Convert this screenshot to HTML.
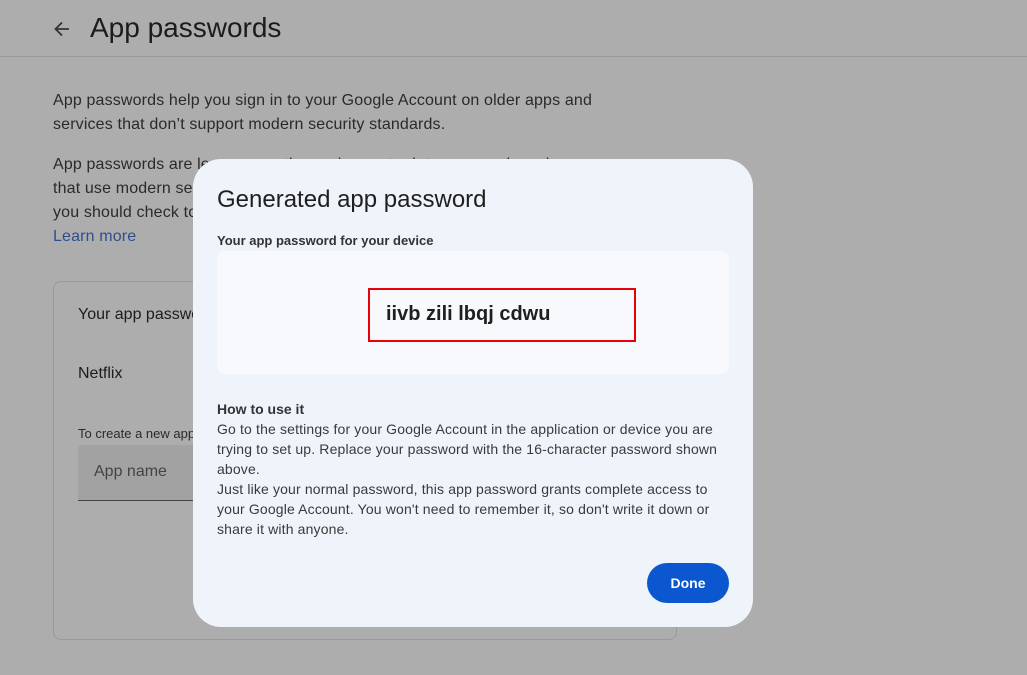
<!DOCTYPE html>
<html><head><meta charset="utf-8"><style>
*{margin:0;padding:0;box-sizing:border-box}
body{width:1027px;height:675px;overflow:hidden;background:#adadad;font-family:"Liberation Sans",Arial,sans-serif;color:#1a1a1a;position:relative}
.a{position:absolute;white-space:nowrap}
</style></head><body>
<svg class="a" style="left:52px;top:19px" width="20" height="20" viewBox="0 0 20 20"><path d="M17 10H4M10 3.5L3.5 10 10 16.5" stroke="#333" stroke-width="1.8" fill="none"/></svg>
<div class="a" style="left:90px;top:12px;font-size:28px;color:#1c1c1c">App passwords</div>
<div class="a" style="left:0;top:56px;width:1027px;height:1px;background:#999"></div>
<div class="a" style="left:53px;top:89px;font-size:16px;line-height:24px;color:#2a2a2a;letter-spacing:0.15px">App passwords help you sign in to your Google Account on older apps and<br>services that don’t support modern security standards.</div>
<div class="a" style="left:53px;top:153px;font-size:16px;line-height:24px;color:#2a2a2a;letter-spacing:0.15px">App passwords are less secure than using up-to-date apps and services<br>that use modern security standards. Before you create an app password,<br>you should check to see if your app needs this in order to sign in.<br><span style="color:#2d4e8e">Learn more</span></div>
<div class="a" style="left:53px;top:281px;width:624px;height:359px;border:1px solid #9a9a9a;border-radius:8px"></div>
<div class="a" style="left:78px;top:306px;font-size:16px;color:#1c1c1c">Your app passwords</div>
<div class="a" style="left:78px;top:365px;font-size:16px;color:#1c1c1c">Netflix</div>
<div class="a" style="left:78px;top:426px;font-size:13px;color:#2a2a2a">To create a new app specific password</div>
<div class="a" style="left:78px;top:445px;width:300px;height:56px;background:#a2a2a2;border-bottom:1px solid #444;border-radius:4px 4px 0 0"></div>
<div class="a" style="left:94px;top:463px;font-size:16px;color:#444">App name</div>

<div class="a" style="left:193px;top:159px;width:560px;height:468px;background:#eff3fa;border-radius:28px"></div>
<div class="a" style="left:217px;top:186px;font-size:24px;color:#1f1f1f">Generated app password</div>
<div class="a" style="left:217px;top:233px;font-size:13px;font-weight:bold;color:#333">Your app password for your device</div>
<div class="a" style="left:217px;top:251px;width:512px;height:123px;background:#f7f9fd;border-radius:8px"></div>
<div class="a" style="left:368px;top:288px;width:268px;height:54px;border:2px solid #e8000b"></div>
<div class="a" style="left:386px;top:303px;font-size:20px;font-weight:bold;color:#1f1f1f">iivb zili lbqj cdwu</div>
<div class="a" style="left:217px;top:401px;font-size:14px;font-weight:bold;color:#333">How to use it</div>
<div class="a" style="left:217px;top:419px;font-size:14px;line-height:20px;color:#3a3a3a;letter-spacing:0.15px">Go to the settings for your Google Account in the application or device you are<br>trying to set up. Replace your password with the 16-character password shown<br>above.<br>Just like your normal password, this app password grants complete access to<br>your Google Account. You won't need to remember it, so don't write it down or<br>share it with anyone.</div>
<div class="a" style="left:647px;top:563px;width:82px;height:40px;background:#0b57d0;border-radius:20px;color:#fff;font-size:14px;font-weight:bold;text-align:center;line-height:40px">Done</div>
</body></html>
